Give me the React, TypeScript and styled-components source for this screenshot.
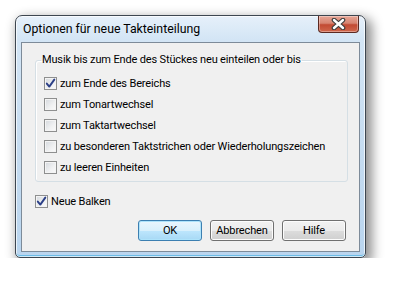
import React from "react";
import styled, { createGlobalStyle, css } from "styled-components";

const GlobalStyle = createGlobalStyle`
  body {
    margin: 0;
    background: #ffffff;
    font-family: Roboto, "Liberation Sans", Arial, sans-serif;
    font-size: 11px;
    letter-spacing: -0.15px;
    color: #000;
  }
`;

type Option = {
  label: string;
  checked?: boolean;
};

const options: Option[] = [
  { label: "zum Ende des Bereichs", checked: true },
  { label: "zum Tonartwechsel" },
  { label: "zum Taktartwechsel" },
  { label: "zu besonderen Taktstrichen oder Wiederholungszeichen" },
  { label: "zu leeren Einheiten" },
];

const CheckBox = ({ checked }: { checked?: boolean }) => (
  <Box>
    {checked && (
      <svg width="11" height="11" viewBox="0 0 11 11">
        <path
          d="M1.8 5.6 L4.3 8.6 L9.3 1.6"
          fill="none"
          stroke="#2b3f87"
          strokeWidth="1.9"
          strokeLinecap="round"
          strokeLinejoin="round"
        />
      </svg>
    )}
  </Box>
);

const CloseGlyph = () => (
  <svg width="15" height="12" viewBox="0 0 15 12">
    <path d="M3 2 L12 10 M12 2 L3 10" stroke="#3b3b3b" strokeWidth="4.6" strokeLinecap="round" />
    <path d="M3 2 L12 10 M12 2 L3 10" stroke="#ffffff" strokeWidth="2.4" strokeLinecap="round" />
  </svg>
);

const App = () => {
  return (
    <Page>
      <GlobalStyle />
      <Window>
        <TitleBar>
          <Title>Optionen für neue Takteinteilung</Title>
          <Close>
            <CloseGlyph />
          </Close>
        </TitleBar>
        <Client>
          <Group>
            <Legend>Musik bis zum Ende des Stückes neu einteilen oder bis</Legend>
            {options.map((o) => (
              <Row key={o.label}>
                <CheckBox checked={o.checked} />
                <span>{o.label}</span>
              </Row>
            ))}
          </Group>
          <Row $outer>
            <CheckBox checked />
            <span>Neue Balken</span>
          </Row>
          <Buttons>
            <Button $primary>OK</Button>
            <Button>Abbrechen</Button>
            <Button>Hilfe</Button>
          </Buttons>
        </Client>
      </Window>
    </Page>
  );
};

const Page = styled.div`
  padding: 15px 0 0 15px;
`;

const Window = styled.div`
  box-sizing: border-box;
  width: 351px;
  height: 243px;
  border: 1px solid #3d4650;
  border-radius: 7px 7px 5px 5px;
  background: linear-gradient(
    180deg,
    #e6f0fa 0px,
    #d3e5f5 24px,
    #c4dbf0 60%,
    #b9d5ef 100%
  );
  box-shadow: inset 0 0 0 1px rgba(255, 255, 255, 0.7),
    inset 0 -2px 0 0 #6bbbe6, 4px 5px 12px 2px rgba(0, 0, 0, 0.45);
  display: flex;
  flex-direction: column;
`;

const TitleBar = styled.div`
  height: 26px;
  display: flex;
  justify-content: space-between;
  align-items: flex-start;
  padding: 0 6px 0 7px;
`;

const Title = styled.div`
  padding-top: 6px;
  font-size: 12.3px;
  letter-spacing: 0;
  color: #000;
`;

const Close = styled.div`
  box-sizing: border-box;
  width: 41px;
  height: 17px;
  border: 1px solid #5b2a22;
  border-top: none;
  border-radius: 0 0 4px 4px;
  background: linear-gradient(
    180deg,
    #e7a696 0%,
    #d78471 45%,
    #c24a33 55%,
    #d0674c 100%
  );
  box-shadow: inset 0 0 0 1px rgba(255, 255, 255, 0.35);
  display: flex;
  align-items: center;
  justify-content: center;
`;

const Client = styled.div`
  flex: 1;
  margin: 0 5px 5px;
  border: 1px solid #7d8b99;
  background: #f0f0f0;
  display: flex;
  flex-direction: column;
`;

const Group = styled.fieldset`
  margin: 10px 11px 0 13px;
  padding: 6px 0 3px 8px;
  border: 1px solid #d5dfe5;
  border-radius: 3px;
  box-shadow: inset 1px 1px 0 #fff;
`;

const Legend = styled.legend`
  margin-left: -3px;
  padding: 0 1px;
  line-height: 14px;
  white-space: nowrap;
`;

const Row = styled.label<{ $outer?: boolean }>`
  height: 21px;
  display: flex;
  align-items: center;
  gap: 3px;
  white-space: nowrap;
  ${(p) =>
    p.$outer &&
    css`
      margin: 9px 0 0 13px;
    `}
`;

const Box = styled.span`
  box-sizing: border-box;
  width: 13px;
  height: 13px;
  flex: none;
  border: 1px solid #8e8f8f;
  background: linear-gradient(135deg, #d4d8dd 0%, #f0f1f2 60%, #fbfbfb 100%);
  box-shadow: inset 0 0 0 1px #f4f4f4;
  display: flex;
  align-items: center;
  justify-content: center;
`;

const Buttons = styled.div`
  display: flex;
  justify-content: flex-end;
  gap: 8px;
  margin-top: 8px;
  padding-right: 13px;
`;

const Button = styled.div<{ $primary?: boolean }>`
  box-sizing: border-box;
  width: 64px;
  height: 21px;
  border: 1px solid #707070;
  border-radius: 3px;
  background: linear-gradient(
    180deg,
    #f2f2f2 0%,
    #ebebeb 50%,
    #dddddd 50%,
    #cfcfcf 100%
  );
  box-shadow: inset 0 0 0 1px #fcfcfc;
  display: flex;
  align-items: center;
  justify-content: center;
  ${(p) =>
    p.$primary &&
    css`
      border-color: #3c7fb1;
      background: linear-gradient(
        180deg,
        #eaf6fd 0%,
        #d9f0fc 50%,
        #bee6fd 50%,
        #a7d9f5 100%
      );
      box-shadow: inset 0 0 0 1px #aee3fb;
    `}
`;

export default App;
